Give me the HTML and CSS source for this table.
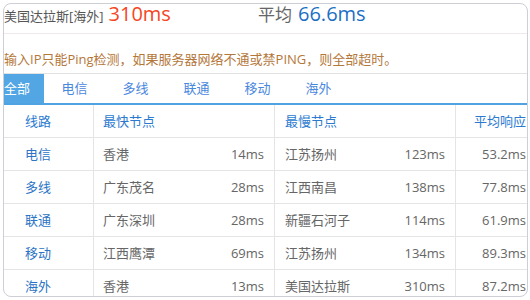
FILE: index.html
```html
<!DOCTYPE html>
<html lang="zh-CN">
<head>
<meta charset="utf-8">
<title>Ping</title>
<link rel="stylesheet" href="styles.css">
</head>
<body>
<div class="frame">
  <div class="summary">
    <div class="half">
      <span class="loc">美国达拉斯[海外]</span>
      <span class="max">310ms</span>
    </div>
    <div class="half">
      <span class="avg-label">平均</span>
      <span class="avg">66.6ms</span>
    </div>
  </div>
  <div class="notice">输入IP只能Ping检测，如果服务器网络不通或禁PING，则全部超时。</div>
  <div class="tabs">
    <span class="tab first active">全部</span>
    <span class="tab">电信</span>
    <span class="tab">多线</span>
    <span class="tab">联通</span>
    <span class="tab">移动</span>
    <span class="tab">海外</span>
  </div>
  <div class="table">
    <div class="row head">
      <div class="cell c1">线路</div>
      <div class="cell c2">最快节点</div>
      <div class="cell c3">最慢节点</div>
      <div class="cell c4">平均响应</div>
    </div>
    <div class="row">
      <div class="cell c1">电信</div>
      <div class="cell c2"><span>香港</span><span>14ms</span></div>
      <div class="cell c3"><span>江苏扬州</span><span>123ms</span></div>
      <div class="cell c4">53.2ms</div>
    </div>
    <div class="row">
      <div class="cell c1">多线</div>
      <div class="cell c2"><span>广东茂名</span><span>28ms</span></div>
      <div class="cell c3"><span>江西南昌</span><span>138ms</span></div>
      <div class="cell c4">77.8ms</div>
    </div>
    <div class="row">
      <div class="cell c1">联通</div>
      <div class="cell c2"><span>广东深圳</span><span>28ms</span></div>
      <div class="cell c3"><span>新疆石河子</span><span>114ms</span></div>
      <div class="cell c4">61.9ms</div>
    </div>
    <div class="row">
      <div class="cell c1">移动</div>
      <div class="cell c2"><span>江西鹰潭</span><span>69ms</span></div>
      <div class="cell c3"><span>江苏扬州</span><span>134ms</span></div>
      <div class="cell c4">89.3ms</div>
    </div>
    <div class="row">
      <div class="cell c1">海外</div>
      <div class="cell c2"><span>香港</span><span>13ms</span></div>
      <div class="cell c3"><span>美国达拉斯</span><span>310ms</span></div>
      <div class="cell c4">87.2ms</div>
    </div>
  </div>
</div>
</body>
</html>
```

FILE: styles.css
```css
html, body {
  margin: 0;
  padding: 0;
  background: #fff;
}
body {
  font-family: "Open Sans", "Noto Sans CJK SC", sans-serif;
  font-size: 13px;
  color: #666;
}
.frame {
  margin: 3px 0 0 3px;
  width: 523px;
  height: 292px;
  border: 1px solid #cdced6;
  border-radius: 8px;
  background: #fff;
}
.summary {
  display: grid;
  grid-template-columns: 254px 1fr;
  height: 29px;
  border-bottom: 1px solid #efe9ee;
}
.half {
  display: flex;
  align-items: baseline;
  line-height: normal;
  margin-top: -4px;
  height: 33px;
}
.loc {
  color: #555;
  font-size: 13px;
}
.max {
  color: #f5461e;
  font-size: 20px;
  margin-left: 5px;
}
.avg-label {
  color: #666;
  font-size: 17px;
}
.avg {
  color: #1a6fc4;
  font-size: 20px;
  margin-left: 6px;
}
.notice {
  height: 40px;
  box-sizing: border-box;
  padding-top: 16px;
  line-height: 18px;
  color: #b4773a;
  border-bottom: 1px solid #e2e2e2;
  white-space: nowrap;
}
.tabs {
  display: flex;
  height: 29px;
  border-bottom: 2px solid #4fa3e0;
}
.tab {
  width: 61px;
  flex: none;
  text-align: center;
  line-height: 29px;
  color: #4a87de;
}
.tab.first {
  width: 40px;
  text-align: left;
}
.tab.active {
  background: #51a6e3;
  color: #fff;
}
.table {
  height: 191px;
  overflow: hidden;
  border-radius: 0 0 7px 7px;
}
.row {
  display: grid;
  grid-template-columns: 90px 181px 181px 71px;
  height: 33px;
  border-bottom: 1px solid #e5e5e8;
  box-sizing: border-box;
}
.cell {
  line-height: 32px;
  border-right: 1px solid #e5e5e8;
  white-space: nowrap;
}
.c1 {
  padding-left: 21px;
  color: #2b74c6;
}
.c2 {
  display: flex;
  justify-content: space-between;
  padding: 0 10px 0 9px;
}
.c3 {
  display: flex;
  justify-content: space-between;
  padding: 0 10px 0 10px;
}
.c4 {
  border-right: none;
  text-align: right;
  padding-right: 1px;
}
.head .cell {
  color: #2b7ad0;
}
```
